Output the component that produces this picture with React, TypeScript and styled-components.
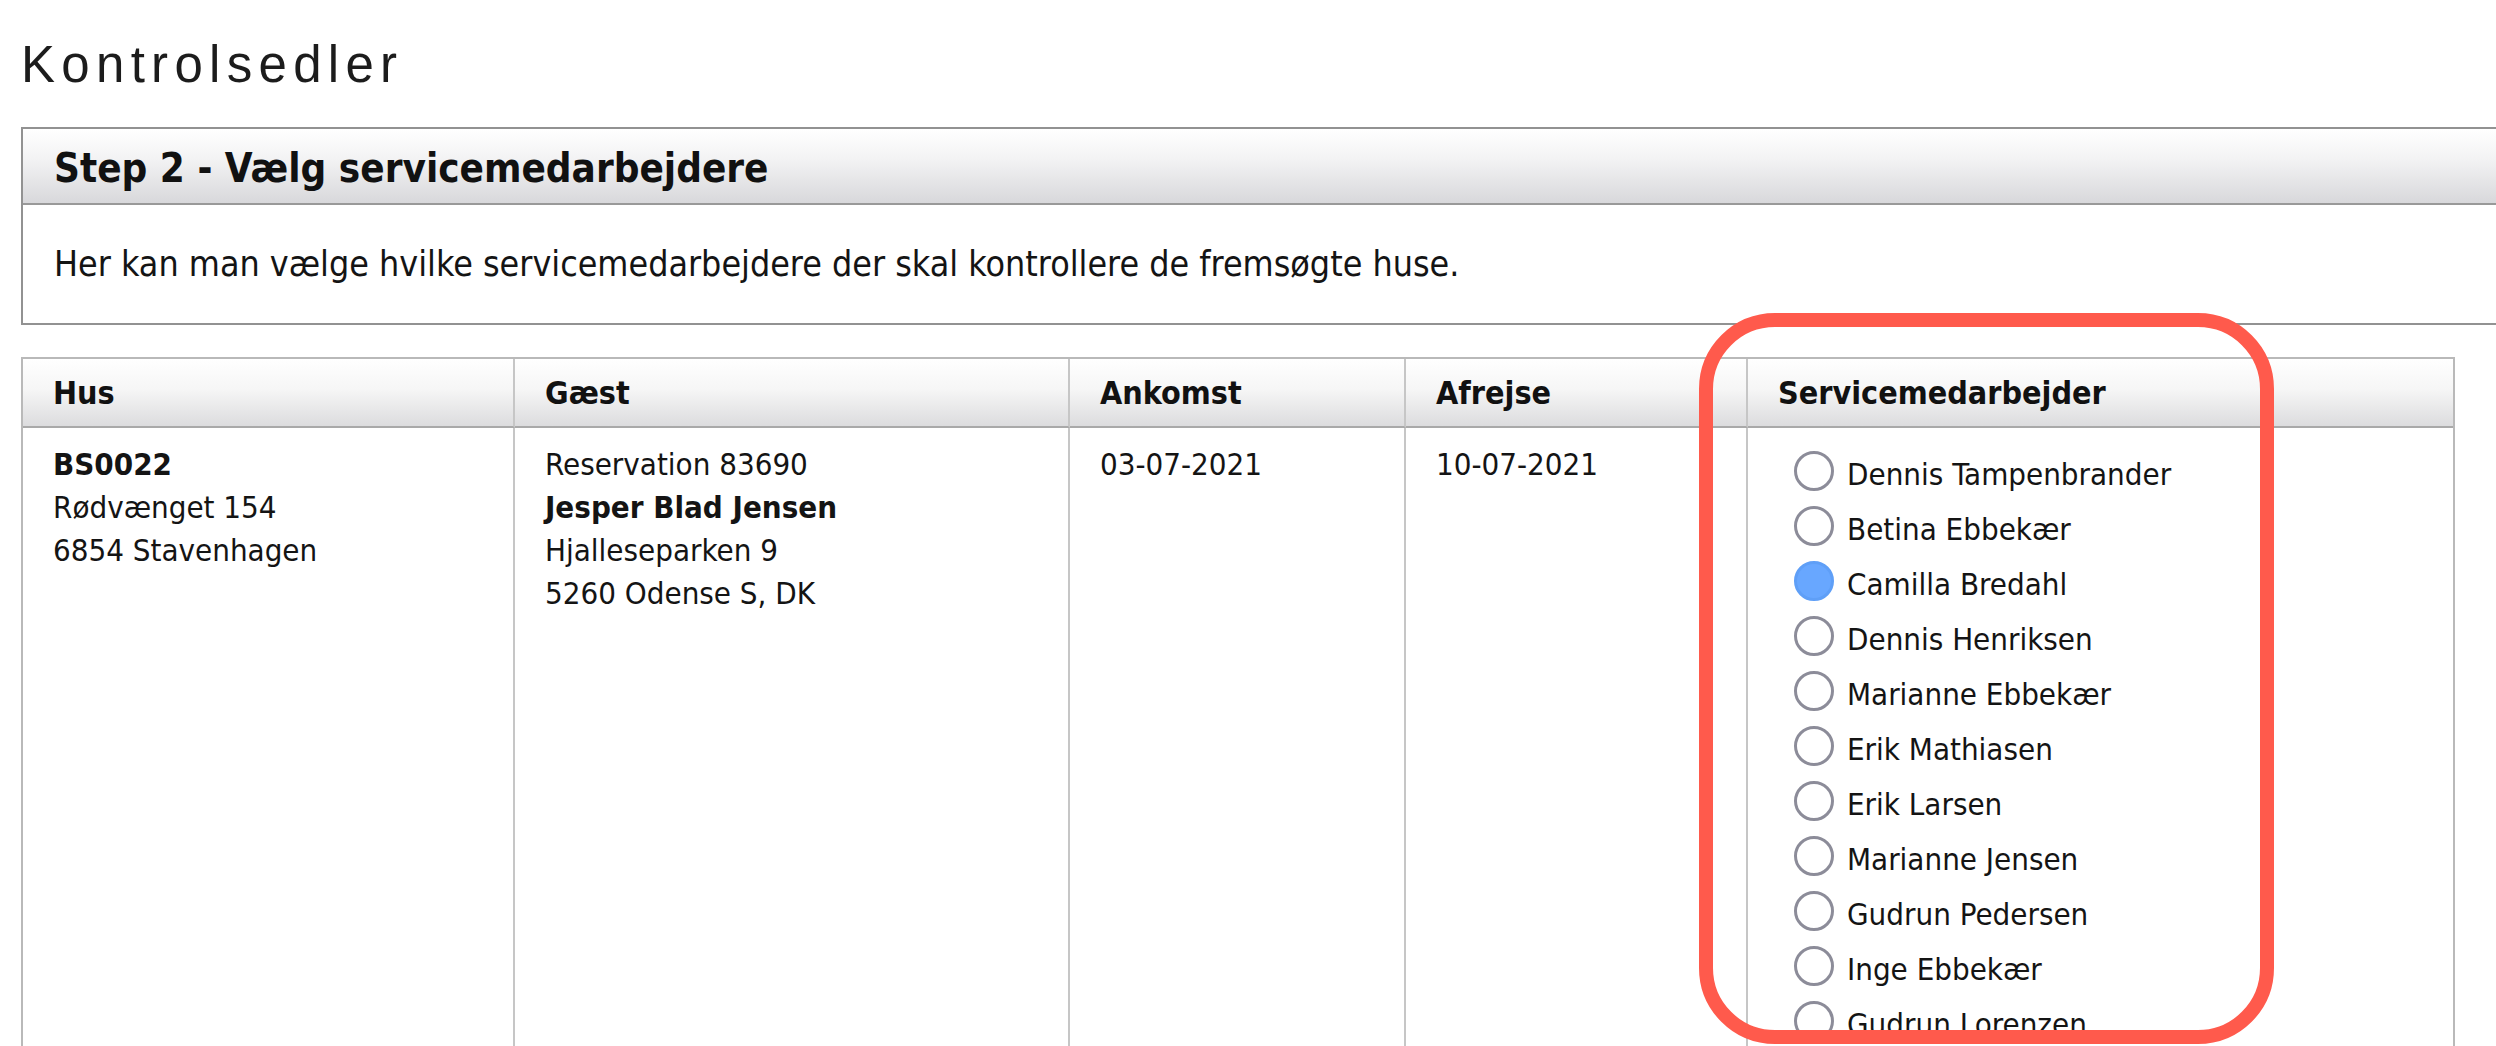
import styled, { createGlobalStyle } from "styled-components"

const GlobalStyle = createGlobalStyle`
  html, body {
    margin: 0;
    padding: 0;
    background: #ffffff;
    overflow: hidden;
  }
  body {
    font-family: "DejaVu Sans Condensed", "DejaVu Sans", sans-serif;
    font-stretch: condensed;
    color: #141414;
  }
`

const Page = styled.div`
  position: relative;
  padding: 40px 0 0 21px;
  height: 1046px;
  box-sizing: border-box;
`

const Title = styled.h1`
  margin: 0;
  font-family: "Liberation Sans", Arial, sans-serif;
  font-stretch: normal;
  font-weight: 400;
  font-size: 51px;
  line-height: 49px;
  letter-spacing: 6.3px;
  color: #1c1c1c;
`

const StepBox = styled.section`
  margin-top: 38px;
  width: 2520px;
  border: 2px solid #929292;
`

const StepHeader = styled.h2`
  margin: 0;
  height: 76px;
  box-sizing: border-box;
  padding: 3px 0 0 31px;
  line-height: 73px;
  font-size: 40px;
  font-weight: 700;
  color: #111;
  background: linear-gradient(to bottom, #ffffff 0%, #f3f3f4 40%, #d8d8db 100%);
  border-bottom: 2px solid #999999;
`

const StepText = styled.p`
  margin: 0;
  padding: 38px 31px 38px;
  font-size: 35.5px;
  line-height: 42px;
  color: #141414;
`

const Table = styled.div`
  margin-top: 32px;
  width: 2434px;
  box-sizing: border-box;
  border: 2px solid #b9b9b9;
  display: grid;
  grid-template-columns: 492px 555px 336px 342px 1fr;
`

const HeadCell = styled.div<{ $last?: boolean }>`
  height: 69px;
  box-sizing: border-box;
  padding: 1px 0 0 30px;
  line-height: 66px;
  font-size: 32px;
  font-weight: 700;
  color: #111;
  background: linear-gradient(to bottom, #ffffff 0%, #f6f6f6 45%, #dcdcde 100%);
  border-bottom: 2px solid #a9a9a9;
  border-right: ${(p) => (p.$last ? "none" : "2px solid #c6c6c6")};
`

const Cell = styled.div<{ $last?: boolean }>`
  min-height: 700px;
  box-sizing: border-box;
  padding: 15px 0 0 30px;
  font-size: 31px;
  line-height: 43px;
  color: #141414;
  border-right: ${(p) => (p.$last ? "none" : "2px solid #c6c6c6")};
`

const Line = styled.div<{ $bold?: boolean }>`
  font-weight: ${(p) => (p.$bold ? 700 : 400)};
  white-space: nowrap;
`

const RadioList = styled.div`
  display: flex;
  flex-direction: column;
  padding: 4px 0 0 16px;
`

const RadioRow = styled.label`
  display: flex;
  align-items: center;
  height: 55px;
  gap: 13px;
  white-space: nowrap;
  line-height: 55px;
`

const Radio = styled.input`
  appearance: none;
  margin: 0 0 7px 0;
  width: 40px;
  height: 40px;
  box-sizing: border-box;
  border-radius: 50%;
  border: 3px solid #8c8c99;
  background: #ffffff;
  flex: none;

  &:checked {
    border-color: #5f9ff7;
    background: #68a7ff;
  }
`

// red annotation drawn over the staff column
const Highlight = styled.div`
  position: absolute;
  left: 1699px;
  top: 313px;
  width: 575px;
  height: 731px;
  box-sizing: border-box;
  border: 14px solid #ff5a4c;
  border-radius: 76px;
  pointer-events: none;
`

const staff = [
  "Dennis Tampenbrander",
  "Betina Ebbekær",
  "Camilla Bredahl",
  "Dennis Henriksen",
  "Marianne Ebbekær",
  "Erik Mathiasen",
  "Erik Larsen",
  "Marianne Jensen",
  "Gudrun Pedersen",
  "Inge Ebbekær",
  "Gudrun Lorenzen"
]

const App = () => {
  return (
    <Page>
      <GlobalStyle />
      <Title>Kontrolsedler</Title>

      <StepBox>
        <StepHeader>Step 2 - Vælg servicemedarbejdere</StepHeader>
        <StepText>
          Her kan man vælge hvilke servicemedarbejdere der skal kontrollere de fremsøgte huse.
        </StepText>
      </StepBox>

      <Table>
        <HeadCell>Hus</HeadCell>
        <HeadCell>Gæst</HeadCell>
        <HeadCell>Ankomst</HeadCell>
        <HeadCell>Afrejse</HeadCell>
        <HeadCell $last>Servicemedarbejder</HeadCell>

        <Cell>
          <Line $bold>BS0022</Line>
          <Line>Rødvænget 154</Line>
          <Line>6854 Stavenhagen</Line>
        </Cell>
        <Cell>
          <Line>Reservation 83690</Line>
          <Line $bold>Jesper Blad Jensen</Line>
          <Line>Hjalleseparken 9</Line>
          <Line>5260 Odense S, DK</Line>
        </Cell>
        <Cell>
          <Line>03-07-2021</Line>
        </Cell>
        <Cell>
          <Line>10-07-2021</Line>
        </Cell>
        <Cell $last>
          <RadioList>
            {staff.map((name) => (
              <RadioRow key={name}>
                <Radio
                  type="radio"
                  name="servicemedarbejder"
                  defaultChecked={name === "Camilla Bredahl"}
                />
                {name}
              </RadioRow>
            ))}
          </RadioList>
        </Cell>
      </Table>

      <Highlight />
    </Page>
  )
}

export default App
